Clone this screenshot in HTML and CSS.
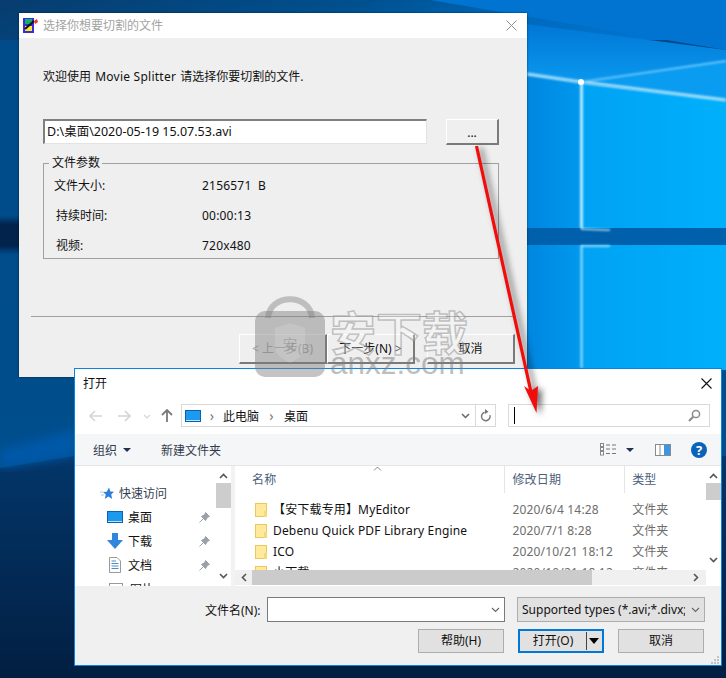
FILE: index.html
```html
<!DOCTYPE html>
<html lang="zh-CN">
<head>
  <meta charset="UTF-8" />
  <meta name="viewport" content="width=device-width, initial-scale=1.0"/>
  <title>Movie Splitter</title>
  <link rel="stylesheet" href="styles.css">
</head>
<body>
  <div class="desktop">
    <!-- wallpaper -->
    <svg class="wallpaper" width="726" height="678" viewBox="0 0 726 678">
      <defs>
        <linearGradient id="topGrad" x1="0" y1="0" x2="1" y2="0.15">
          <stop offset="0" stop-color="#073c6e"/>
          <stop offset="0.5" stop-color="#00508f"/>
          <stop offset="0.75" stop-color="#0068ba"/>
          <stop offset="1" stop-color="#0074d0"/>
        </linearGradient>
        <linearGradient id="skyGrad" x1="0" y1="0" x2="0" y2="1">
          <stop offset="0" stop-color="#0074d2"/>
          <stop offset="1" stop-color="#0a98ee"/>
        </linearGradient>
        <linearGradient id="paneRight" x1="0" y1="0" x2="1" y2="0">
          <stop offset="0" stop-color="#00a2f4"/>
          <stop offset="1" stop-color="#00b0fb"/>
        </linearGradient>
        <linearGradient id="paneLeft" x1="0" y1="0" x2="1" y2="0">
          <stop offset="0" stop-color="#0086e0"/>
          <stop offset="1" stop-color="#0098ee"/>
        </linearGradient>
        <linearGradient id="leftGrad" x1="0" y1="0" x2="0" y2="1">
          <stop offset="0" stop-color="#004a88"/>
          <stop offset="1" stop-color="#00508f"/>
        </linearGradient>
        <linearGradient id="floorGrad" x1="0" y1="0" x2="0" y2="1">
          <stop offset="0" stop-color="#03366a"/>
          <stop offset="1" stop-color="#021f42"/>
        </linearGradient>
        <linearGradient id="barGrad" x1="0" y1="0" x2="0" y2="1">
          <stop offset="0" stop-color="#004a88"/>
          <stop offset="0.22" stop-color="#02244c"/>
          <stop offset="0.78" stop-color="#02244c"/>
          <stop offset="1" stop-color="#004a88"/>
        </linearGradient>
        <filter id="soft"><feGaussianBlur stdDeviation="1.2"/></filter>
        <filter id="softer"><feGaussianBlur stdDeviation="5"/></filter>
      </defs>
      <rect width="726" height="678" fill="url(#leftGrad)"/>
      <rect width="726" height="40" fill="url(#topGrad)"/>
      <polygon points="430,0 726,0 726,50" fill="#0074d0"/>
      <polygon points="480,18 726,50 726,65 581,82 527,73" fill="url(#skyGrad)"/>
      <polygon points="527,73 581,83 581,228 527,228" fill="url(#paneLeft)"/>
      <polygon points="581,83 726,100 726,228 581,228" fill="url(#paneRight)"/>
      <polygon points="581,82 726,60 726,100" fill="#0a9cf0"/>
      <rect x="527" y="228" width="199" height="17" fill="#0060ab"/>
      <rect x="527" y="245" width="54" height="125" fill="url(#paneLeft)"/>
      <rect x="581" y="245" width="145" height="125" fill="url(#paneRight)"/>
      <rect x="0" y="216" width="20" height="38" fill="url(#barGrad)"/>
      <polygon points="0,468 74,456 726,456 726,678 0,678" fill="url(#floorGrad)"/>
      <polygon points="0,450 74,430 74,456 0,468" fill="#0058a8" filter="url(#softer)"/>
      <g filter="url(#soft)">
        <polyline points="527,74 581,82 726,100" fill="none" stroke="#a8e4ff" stroke-width="3"/>
        <polyline points="581,82 726,61" fill="none" stroke="#7fd0ff" stroke-width="1.5"/>
        <line x1="581.5" y1="83" x2="581.5" y2="228" stroke="#b4ecff" stroke-width="3"/>
        <line x1="581.5" y1="245" x2="581.5" y2="368" stroke="#9fe4ff" stroke-width="2"/>
        <line x1="581" y1="229" x2="610" y2="230" stroke="#b4ecff" stroke-width="1.5"/>
        <line x1="581" y1="246" x2="610" y2="246" stroke="#b4ecff" stroke-width="1.5"/>
      </g>
      <circle cx="581" cy="82" r="3" fill="#fff"/>
    </svg>

    <!-- Movie Splitter wizard -->
    <div class="wizard">
      <div class="wizard-title">
        <svg class="app-icon" width="15" height="15" viewBox="0 0 15 15">
          <rect x="0" y="0" width="11" height="15" fill="#3a2cd8"/>
          <rect x="2" y="1" width="7" height="5" fill="#12b06a"/>
          <rect x="2" y="8" width="7" height="5" fill="#f2ea2e"/>
          <line x1="2" y1="11" x2="11" y2="3" stroke="#111" stroke-width="2"/>
          <path d="M11 3 L14 1 L15 4 L12 6 Z" fill="#f03030"/>
        </svg>
        <span class="wizard-caption">选择你想要切割的文件</span>
        <svg class="close-x" width="11" height="11" viewBox="0 0 11 11">
          <path d="M0.5 0.5 L10.5 10.5 M10.5 0.5 L0.5 10.5" stroke="#8c8c8c" stroke-width="1"/>
        </svg>
      </div>
      <div class="wizard-body">
        <p class="welcome">欢迎使用 <span class="latin">Movie Splitter</span> 请选择你要切割的文件.</p>
        <div class="file-row">
          <div class="path-box">D:\桌面\2020-05-19 15.07.53.avi</div>
          <div class="raised browse">...</div>
        </div>
        <fieldset class="params">
          <legend>文件参数</legend>
          <div class="param"><span class="param-name first">文件大小:</span><span class="param-value">2156571&nbsp; B</span></div>
          <div class="param"><span class="param-name">持续时间:</span><span class="param-value">00:00:13</span></div>
          <div class="param"><span class="param-name">视频:</span><span class="param-value">720x480</span></div>
        </fieldset>
        <div class="wizard-sep"></div>
        <div class="wizard-buttons">
          <div class="raised wiz-btn disabled">&lt; 上一步(B)</div>
          <div class="raised wiz-btn">下一步(N) &gt;</div>
          <div class="raised wiz-btn cancel">取消</div>
        </div>
      </div>
    </div>

    <!-- file open dialog -->
    <div class="dialog">
      <div class="dialog-title">
        <span>打开</span>
        <svg class="dialog-close" width="11" height="11" viewBox="0 0 11 11">
          <path d="M0.5 0.5 L10.5 10.5 M10.5 0.5 L0.5 10.5" stroke="#111" stroke-width="1.1"/>
        </svg>
      </div>

      <div class="nav-row">
        <div class="nav-arrows">
          <svg width="14" height="12" viewBox="0 0 14 12"><path d="M6 1 L1 6 L6 11 M1 6 H13" fill="none" stroke="#d5d5d5" stroke-width="1.6"/></svg>
          <svg class="fwd" width="14" height="12" viewBox="0 0 14 12"><path d="M8 1 L13 6 L8 11 M13 6 H1" fill="none" stroke="#d5d5d5" stroke-width="1.6"/></svg>
          <svg class="drop" width="8" height="5" viewBox="0 0 8 5"><path d="M1 1 L4 4 L7 1" fill="none" stroke="#d5d5d5" stroke-width="1.2"/></svg>
          <svg class="up" width="12" height="14" viewBox="0 0 12 14"><path d="M1 6 L6 1 L11 6 M6 1 V13" fill="none" stroke="#7a7a7a" stroke-width="1.8"/></svg>
        </div>
        <div class="address">
          <svg class="pc-icon" width="16" height="12" viewBox="0 0 16 12"><rect x="0.5" y="0.5" width="15" height="11" fill="#1c9af0" stroke="#0a63b0"/><rect x="1" y="10" width="14" height="1" fill="#bfe3fb"/></svg>
          <span class="crumb-arrow">›</span>
          <span class="crumb">此电脑</span>
          <span class="crumb-arrow">›</span>
          <span class="crumb">桌面</span>
          <svg class="addr-drop" width="9" height="6" viewBox="0 0 9 6"><path d="M1 1 L4.5 4.5 L8 1" fill="none" stroke="#666" stroke-width="1.5"/></svg>
          <div class="addr-refresh">
            <svg width="12" height="13" viewBox="0 0 12 13"><path d="M6.5 3 A4.3 4.3 0 1 1 2 7" fill="none" stroke="#777" stroke-width="1.4" transform="rotate(70 6 7)"/><path d="M5 0 L8.5 2.8 L5 5 Z" fill="#777"/></svg>
          </div>
        </div>
        <div class="search">
          <span class="caret"></span>
          <svg class="search-icon" width="13" height="13" viewBox="0 0 13 13"><circle cx="8" cy="5" r="3.6" fill="none" stroke="#8a8a8a" stroke-width="1.5"/><line x1="5.2" y1="7.8" x2="1" y2="12" stroke="#8a8a8a" stroke-width="2"/></svg>
        </div>
      </div>

      <div class="toolbar">
        <span class="tool">组织</span>
        <span class="tri"></span>
        <span class="tool new-folder">新建文件夹</span>
        <svg class="view-icon" width="17" height="13" viewBox="0 0 17 13">
          <rect x="0.5" y="0.5" width="3" height="3" fill="#fff" stroke="#888"/>
          <rect x="0.5" y="4.5" width="3" height="3" fill="#fff" stroke="#888"/>
          <rect x="0.5" y="8.5" width="3" height="3.5" fill="#fff" stroke="#888"/>
          <path d="M6 2 H10 M12 2 H16 M6 6 H10 M12 6 H16 M6 10.5 H10 M12 10.5 H16" stroke="#777" stroke-width="1"/>
        </svg>
        <span class="tri view-tri"></span>
        <svg class="pane-icon" width="16" height="12" viewBox="0 0 16 12">
          <rect x="0.5" y="0.5" width="15" height="11" fill="#fff" stroke="#8a8a8a"/>
          <rect x="9" y="1" width="6" height="10" fill="#3b97e6"/>
          <line x1="5" y1="1" x2="5" y2="11" stroke="#8a8a8a"/>
        </svg>
        <span class="help">?</span>
      </div>

      <div class="content">
        <div class="nav-pane">
          <div class="nav-list">
            <div class="nav-item quick">
              <svg width="14" height="13" viewBox="0 0 14 13"><path d="M9 0.5 L10.4 4.6 L14 4.8 L11.2 7.4 L12.2 12 L8.3 9.5 L4.8 12 L5.8 7.6 L3 5 L6.8 4.8 Z" fill="#2b7fd8"/><path d="M0 5 H3 M1 8 H4" stroke="#9ccbf2" stroke-width="1"/></svg>
              <span>快速访问</span>
            </div>
            <div class="nav-item">
              <svg class="nav-icon" width="16" height="12" viewBox="0 0 16 12"><rect x="0.5" y="0.5" width="15" height="11" fill="#1c9af0" stroke="#0a63b0"/><rect x="1" y="10" width="14" height="1" fill="#bfe3fb"/></svg>
              <span>桌面</span>
              <svg class="pin" width="11" height="11" viewBox="0 0 11 11"><path d="M6.5 0.5 L10.5 4.5 L8.5 5.2 L6.5 8.5 L2.5 4.5 L5.8 2.5 Z M4 7 L0.5 10.5" fill="#9aa0a6" stroke="#9aa0a6"/></svg>
            </div>
            <div class="nav-item">
              <svg class="nav-icon" width="16" height="16" viewBox="0 0 16 16"><path d="M5 0 H11 V7 H16 L8 16 L0 7 H5 Z" fill="#2f86dc"/></svg>
              <span>下载</span>
              <svg class="pin" width="11" height="11" viewBox="0 0 11 11"><path d="M6.5 0.5 L10.5 4.5 L8.5 5.2 L6.5 8.5 L2.5 4.5 L5.8 2.5 Z M4 7 L0.5 10.5" fill="#9aa0a6" stroke="#9aa0a6"/></svg>
            </div>
            <div class="nav-item">
              <svg class="nav-icon doc" width="12" height="16" viewBox="0 0 12 16"><path d="M0.5 0.5 H8 L11.5 4 V15.5 H0.5 Z" fill="#fff" stroke="#9a9a9a"/><path d="M2.5 4 H7 M2.5 6.5 H9.5 M2.5 9 H9.5 M2.5 11.5 H9.5" stroke="#4a90c8"/></svg>
              <span>文档</span>
              <svg class="pin" width="11" height="11" viewBox="0 0 11 11"><path d="M6.5 0.5 L10.5 4.5 L8.5 5.2 L6.5 8.5 L2.5 4.5 L5.8 2.5 Z M4 7 L0.5 10.5" fill="#9aa0a6" stroke="#9aa0a6"/></svg>
            </div>
            <div class="nav-item">
              <svg class="nav-icon doc" width="14" height="12" viewBox="0 0 14 12"><rect x="0.5" y="0.5" width="13" height="11" fill="#fff" stroke="#9a9a9a"/></svg>
              <span>图片</span>
            </div>
          </div>
          <div class="vscroll">
            <svg class="sb-arrow" width="9" height="6" viewBox="0 0 9 6"><path d="M1 5 L4.5 1.5 L8 5" fill="none" stroke="#555" stroke-width="1.6"/></svg>
            <div class="sb-thumb nav-thumb"></div>
            <svg class="sb-arrow sb-end" width="9" height="6" viewBox="0 0 9 6"><path d="M1 1 L4.5 4.5 L8 1" fill="none" stroke="#555" stroke-width="1.6"/></svg>
          </div>
        </div>

        <div class="files">
          <div class="files-main">
            <div class="files-view">
              <div class="file-head">
                <div class="col-name head-cell">名称<svg class="sort" width="9" height="5" viewBox="0 0 9 5"><path d="M1 4.5 L4.5 1 L8 4.5" fill="none" stroke="#888"/></svg></div>
                <div class="col-date head-cell">修改日期</div>
                <div class="col-type head-cell">类型</div>
              </div>
              <div class="file-row-item">
                <div class="col-name"><span class="folder"></span>【安下载专用】MyEditor</div>
                <div class="col-date">2020/6/4 14:28</div>
                <div class="col-type">文件夹</div>
              </div>
              <div class="file-row-item">
                <div class="col-name"><span class="folder"></span>Debenu Quick PDF Library Engine</div>
                <div class="col-date">2020/7/1 8:28</div>
                <div class="col-type">文件夹</div>
              </div>
              <div class="file-row-item">
                <div class="col-name"><span class="folder"></span>ICO</div>
                <div class="col-date">2020/10/21 18:12</div>
                <div class="col-type">文件夹</div>
              </div>
              <div class="file-row-item">
                <div class="col-name"><span class="folder"></span>小下载</div>
                <div class="col-date">2020/10/21 18:12</div>
                <div class="col-type">文件夹</div>
              </div>
            </div>
            <div class="vscroll files-vscroll">
              <svg class="sb-arrow" width="9" height="6" viewBox="0 0 9 6"><path d="M1 5 L4.5 1.5 L8 5" fill="none" stroke="#555" stroke-width="1.6"/></svg>
              <div class="sb-thumb files-thumb"></div>
              <svg class="sb-arrow sb-end" width="9" height="6" viewBox="0 0 9 6"><path d="M1 1 L4.5 4.5 L8 1" fill="none" stroke="#555" stroke-width="1.6"/></svg>
            </div>
          </div>
          <div class="hscroll">
            <div class="hscroll-track">
              <svg class="hs-left" width="6" height="9" viewBox="0 0 6 9"><path d="M5 1 L1.5 4.5 L5 8" fill="none" stroke="#555" stroke-width="1.6"/></svg>
              <div class="hs-thumb"></div>
              <svg class="hs-right" width="6" height="9" viewBox="0 0 6 9"><path d="M1 1 L4.5 4.5 L1 8" fill="none" stroke="#555" stroke-width="1.6"/></svg>
            </div>
          </div>
        </div>
      </div>

      <div class="footer">
        <div class="name-row">
          <span class="name-label">文件名(N):</span>
          <div class="name-input">
            <svg width="9" height="6" viewBox="0 0 9 6"><path d="M1 1 L4.5 4.5 L8 1" fill="none" stroke="#666" stroke-width="1.1"/></svg>
          </div>
          <div class="type-select">
            <span class="type-text">Supported types (*.avi;*.divx;*.mpg)</span>
            <svg width="9" height="6" viewBox="0 0 9 6"><path d="M1 1 L4.5 4.5 L8 1" fill="none" stroke="#666" stroke-width="1.1"/></svg>
          </div>
        </div>
        <div class="btn-row">
          <div class="flat-btn">帮助(H)</div>
          <div class="flat-btn open-btn">
            <span class="open-label">打开(O)</span>
            <span class="open-split"></span>
            <span class="open-tri"></span>
          </div>
          <div class="flat-btn">取消</div>
        </div>
        <svg class="grip" width="8" height="8" viewBox="0 0 8 8">
          <path d="M6 0 h2 v2 h-2 Z M3 3 h2 v2 h-2 Z M6 3 h2 v2 h-2 Z M0 6 h2 v2 h-2 Z M3 6 h2 v2 h-2 Z M6 6 h2 v2 h-2 Z" fill="#c4c4c4"/>
        </svg>
      </div>
    </div>

    <!-- red annotation arrow -->
    <svg class="arrow" width="726" height="678" viewBox="0 0 726 678">
      <line x1="476.5" y1="146" x2="531" y2="392" stroke="#f20d0d" stroke-width="3.2"/>
      <path d="M536.5 413 L524 386 L531 391 L538 386 Z" fill="#f20d0d"/>
    </svg>

    <!-- watermark -->
    <div class="watermark">
      <svg class="wm-lock" width="72" height="82" viewBox="0 0 72 82">
        <path d="M14 22 C16 -3 56 -3 58 22" fill="none" stroke="#8e8e8e" stroke-opacity="0.5" stroke-width="6"/>
        <rect x="1" y="15" width="70" height="66" rx="10" fill="#7c7c7c" fill-opacity="0.45"/>
        <path d="M21 32 L36 27 L51 32 V50 C51 59 42 64 36 67 C30 64 21 59 21 50 Z" fill="#fff" fill-opacity="0.14"/>
        <text class="wm-shield" x="36" y="54" text-anchor="middle">安</text>
      </svg>
      <div class="wm-text">
        <div class="wm-cn">安下载</div>
        <div class="wm-en">anxz.com</div>
      </div>
    </div>
  </div>
</body>
</html>
```

FILE: styles.css
```css
* {
  box-sizing: border-box;
}

html, body {
  margin: 0;
  padding: 0;
}

body {
  font-family: "Noto Sans", "Noto Sans CJK SC", sans-serif;
  font-size: 12px;
  color: #111;
  overflow: hidden;
}

.desktop {
  position: relative;
  width: 726px;
  height: 678px;
  overflow: hidden;
}

.wallpaper,
.arrow {
  position: absolute;
  left: 0;
  top: 0;
}

.arrow {
  filter: drop-shadow(4px 2px 3px rgba(0, 0, 0, 0.6));
}

/* wizard window */
.wizard {
  position: absolute;
  left: 19px;
  top: 13px;
  width: 508px;
  height: 364px;
  background: #efefef;
  box-shadow: 0 0 2px rgba(0, 0, 0, 0.6);
}

.wizard-title {
  display: flex;
  align-items: center;
  height: 25px;
  background: #fff;
  padding-left: 4px;
}

.wizard-caption {
  margin-left: 5px;
  color: #a3a3a3;
  line-height: 16px;
}

.close-x {
  margin-left: auto;
  margin-right: 10px;
}

.wizard-body {
  padding: 31px 12px 0 24px;
}

.welcome {
  margin: 0;
  line-height: 16px;
}

.latin {
  letter-spacing: 0.25px;
  margin: 0 1px;
}

.file-row {
  display: flex;
  gap: 19px;
  margin-top: 34px;
}

.path-box {
  width: 384px;
  height: 25px;
  padding: 2px 0 0 2px;
  line-height: 18px;
  font-size: 12.5px;
  background: #fff;
  border-top: 2px solid #7f7f7f;
  border-left: 2px solid #7f7f7f;
  border-right: 1px solid #e3e3e3;
  border-bottom: 1px solid #e3e3e3;
}

.raised {
  background: #efefef;
  border-top: 1px solid #fff;
  border-left: 1px solid #fff;
  border-right: 2px solid #7a7a7a;
  border-bottom: 2px solid #7a7a7a;
  text-align: center;
}

.browse {
  width: 53px;
  height: 26px;
  line-height: 25px;
}

.params {
  width: 456px;
  height: 104px;
  margin: 10px 0 0;
  padding: 7px 0 0;
  border: 1px solid #a0a0a0;
}

.params legend {
  margin-left: 5px;
  padding: 0 2px 0 3px;
  line-height: 16px;
}

.param {
  display: flex;
  line-height: 16px;
  margin-bottom: 14px;
}

.param-name {
  width: 158px;
  padding-left: 12px;
}

.param-name.first {
  padding-left: 10px;
}

.param-value {
  letter-spacing: 0.2px;
}

.wizard-sep {
  width: 484px;
  height: 1px;
  margin: 57px 0 0 -12px;
  background: #a0a0a0;
}

.wizard-buttons {
  display: flex;
  margin: 17px 0 0 196px;
}

.wiz-btn {
  width: 88px;
  height: 30px;
  line-height: 28px;
}

.wiz-btn.disabled {
  color: #a6a6a6;
}

.wiz-btn.cancel {
  margin-left: 12px;
}

/* open dialog */
.dialog {
  position: absolute;
  left: 74px;
  top: 368px;
  width: 648px;
  height: 298px;
  background: #fff;
  border: 1px solid #0a84e0;
  display: flex;
  flex-direction: column;
}

.dialog-title {
  display: flex;
  align-items: center;
  justify-content: space-between;
  height: 28px;
  padding: 0 9px 0 8px;
}

.nav-row {
  display: flex;
  height: 37px;
  padding-top: 7px;
}

.nav-arrows {
  display: flex;
  align-items: flex-start;
  width: 106px;
  padding: 6px 0 0 14px;
}

.nav-arrows .fwd {
  margin-left: 14px;
}

.nav-arrows .drop {
  margin: 4px 0 0 12px;
}

.nav-arrows .up {
  margin: -1px 0 0 10px;
}

.address {
  display: flex;
  align-items: center;
  width: 315px;
  height: 23px;
  border: 1px solid #d9d9d9;
  padding-left: 3px;
}

.crumb-arrow {
  width: 25px;
  text-align: center;
  color: #777;
  font-size: 14px;
  line-height: 16px;
}

.pc-icon + .crumb-arrow {
  width: 22px;
}

.addr-drop {
  margin-left: auto;
  margin-right: 5px;
}

.addr-refresh {
  display: flex;
  align-items: center;
  justify-content: center;
  width: 20px;
  height: 21px;
  border-left: 1px solid #d9d9d9;
}

.search {
  display: flex;
  align-items: center;
  justify-content: space-between;
  width: 202px;
  height: 23px;
  margin-left: 12px;
  padding: 0 8px 0 5px;
  border: 1px solid #d9d9d9;
}

.caret {
  width: 1px;
  height: 17px;
  background: #000;
}

.toolbar {
  display: flex;
  align-items: center;
  height: 32px;
  padding-left: 18px;
  background: #f5f6f7;
  border-bottom: 1px solid #e4e5e6;
  color: #333c4e;
}

.tri {
  width: 0;
  height: 0;
  margin: 1px 0 0 6px;
  border-left: 4px solid transparent;
  border-right: 4px solid transparent;
  border-top: 4px solid #1f3350;
}

.new-folder {
  margin-left: 30px;
}

.view-icon {
  margin-left: 379px;
}

.view-tri {
  margin-left: 9px;
}

.pane-icon {
  margin-left: 21px;
}

.help {
  width: 16px;
  height: 16px;
  margin-left: 20px;
  border-radius: 50%;
  background: #0a63b8;
  color: #fff;
  font-weight: bold;
  font-size: 13px;
  line-height: 16px;
  text-align: center;
}

.content {
  display: flex;
  height: 120px;
  overflow: hidden;
}

.nav-pane {
  display: flex;
  flex: none;
  width: 160px;
  background: #fff;
  border-right: 4px solid #f2f2f2;
}

.nav-list {
  width: 140px;
  padding-top: 15px;
  overflow: hidden;
}

.nav-item {
  display: flex;
  align-items: center;
  height: 24px;
  padding-left: 32px;
  color: #111;
}

.nav-item .nav-icon {
  margin-right: 5px;
}

.nav-item .doc {
  margin-left: 2px;
  margin-right: 7px;
}

.nav-item .pin {
  margin-left: 47px;
}

.nav-item.quick {
  padding-left: 25px;
  color: #333c4e;
}

.nav-item.quick span {
  margin-left: 5px;
}

.vscroll {
  display: flex;
  flex-direction: column;
  align-items: center;
  width: 16px;
  background: #fff;
  padding-top: 7px;
}

.sb-thumb {
  width: 15px;
  background: #cdcdcd;
}

.nav-thumb {
  height: 25px;
  margin-top: 4px;
}

.files-thumb {
  height: 17px;
  margin-top: 4px;
}

.sb-end {
  margin-top: auto;
  margin-bottom: 7px;
}

.files {
  flex: 1;
  display: flex;
  flex-direction: column;
  min-width: 0;
}

.files-main {
  display: flex;
  height: 104px;
}

.files-view {
  width: 471px;
  overflow: hidden;
}

.file-head,
.file-row-item {
  display: flex;
}

.file-head {
  height: 33px;
  color: #4c607a;
}

.head-cell {
  position: relative;
  height: 27px;
  line-height: 27px;
  border-right: 1px solid #e5e5e5;
}

.col-name {
  display: flex;
  align-items: center;
  width: 271px;
  padding-left: 20px;
  letter-spacing: 0.16px;
}

.col-date {
  width: 120px;
  padding-left: 7px;
  color: #6d6d6d;
  letter-spacing: 0.18px;
}

.col-type {
  width: 80px;
  padding-left: 7px;
  color: #6d6d6d;
}

.head-cell.col-name {
  padding-left: 17px;
  display: block;
}

.head-cell.col-date,
.head-cell.col-type {
  color: #4c607a;
}

.head-cell.col-type {
  border-right: 0;
}

.sort {
  position: absolute;
  left: 138px;
  top: 0;
}

.file-row-item {
  height: 21px;
  line-height: 21px;
}

.folder {
  position: relative;
  width: 12px;
  height: 14px;
  margin-right: 6px;
  background: #ffe99c;
  border: 1px solid #ecc85c;
}

.folder::after {
  content: "";
  position: absolute;
  right: -1px;
  bottom: -1px;
  width: 3px;
  height: 6px;
  background: #f5d878;
}

.hscroll {
  display: flex;
  height: 16px;
}

.hscroll-track {
  display: flex;
  align-items: center;
  width: 471px;
  height: 15px;
  background: #f0f0f0;
  padding-left: 6px;
}

.hs-thumb {
  width: 340px;
  height: 15px;
  margin-left: 5px;
  background: #cbcbcb;
}

.hs-right {
  margin-left: auto;
  margin-right: 7px;
}

.footer {
  position: relative;
  flex: 1;
  background: #f0f0f0;
  padding-top: 11px;
}

.name-row {
  display: flex;
  align-items: center;
  padding-left: 130px;
}

.name-label {
  width: 62px;
}

.name-input {
  display: flex;
  align-items: center;
  justify-content: flex-end;
  width: 238px;
  height: 25px;
  padding-right: 4px;
  background: #fff;
  border: 1px solid #7a7a7a;
}

.type-select {
  display: flex;
  align-items: center;
  width: 188px;
  height: 25px;
  margin-left: 12px;
  padding: 0 4px;
  background: #e1e1e1;
  border: 1px solid #adadad;
}

.type-text {
  flex: 1;
  overflow: hidden;
  white-space: nowrap;
  margin-right: 6px;
}

.btn-row {
  display: flex;
  gap: 14px;
  margin: 7px 0 0 343px;
}

.flat-btn {
  width: 86px;
  height: 24px;
  line-height: 22px;
  text-align: center;
  background: #e1e1e1;
  border: 1px solid #adadad;
}

.open-btn {
  display: flex;
  align-items: center;
  background: #e1e1e1;
  border: 2px solid #0078d7;
}

.open-label {
  width: 66px;
}

.open-split {
  width: 1px;
  height: 18px;
  background: #444;
}

.open-tri {
  margin-left: 2px;
  border-left: 5px solid transparent;
  border-right: 5px solid transparent;
  border-top: 6px solid #000;
}

.grip {
  position: absolute;
  right: 2px;
  bottom: 1px;
}

/* watermark */
.watermark {
  position: absolute;
  left: 254px;
  top: 296px;
  display: flex;
  pointer-events: none;
}

.wm-shield {
  font-family: "Noto Sans CJK SC", sans-serif;
  font-size: 15px;
  fill: rgba(120, 120, 120, 0.4);
}

.wm-text {
  margin-left: 4px;
  padding-top: 11px;
}

.wm-cn {
  width: 140px;
  font-size: 46px;
  font-weight: bold;
  line-height: 46px;
  white-space: nowrap;
  font-family: "Noto Sans CJK SC", sans-serif;
  color: rgba(255, 255, 255, 0.3);
  -webkit-text-stroke: 1.5px rgba(140, 140, 140, 0.5);
}

.wm-en {
  margin-top: -3px;
  font-family: "Liberation Sans", sans-serif;
  font-size: 31.5px;
  line-height: 26px;
  color: rgba(125, 125, 125, 0.5);
}
```
